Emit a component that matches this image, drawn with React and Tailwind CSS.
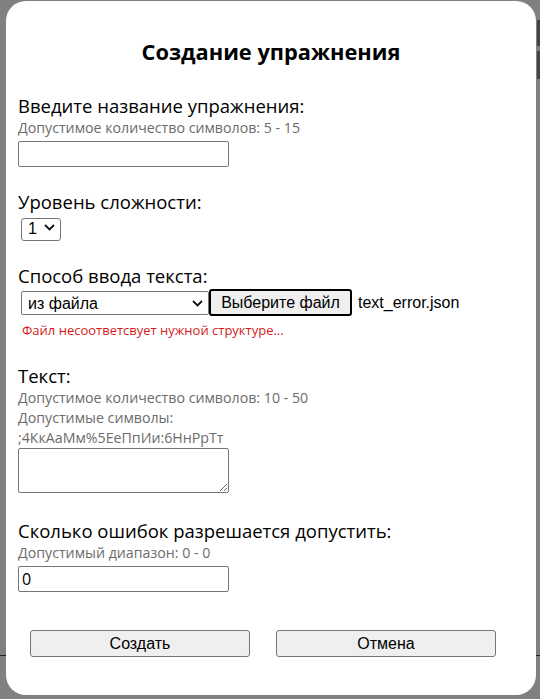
import { useState } from "react";

const ChevronDown = () => (
  <svg width="11" height="7" viewBox="0 0 11 7" fill="none" className="pointer-events-none">
    <path d="M1 1l4.5 4.5L10 1" stroke="#111" strokeWidth="1.8" />
  </svg>
);

const Hint = ({ children }) => (
  <p className="text-[14.2px] leading-[20px] text-[#6b6b6b]">{children}</p>
);

const Label = ({ children }) => (
  <p className="text-[18.5px] leading-[24px] text-black">{children}</p>
);

const App = () => {
  const [name, setName] = useState("");
  const [level, setLevel] = useState("1");
  const [mode, setMode] = useState("file");
  const [text, setText] = useState("");
  const [errors, setErrors] = useState("0");

  return (
    <div
      className="relative h-[699px] w-[540px] overflow-hidden bg-[#808080] pt-px pl-[6px]"
      style={{ fontFamily: '"Open Sans", "Noto Sans", sans-serif' }}
    >
      <div className="absolute left-0 right-0 top-[655px] h-px bg-[#222]" />
      <div className="absolute right-0 top-[20px] h-[26px] w-[3px] bg-[#444]" />
      <div className="absolute right-0 top-[51px] h-[28px] w-[3px] bg-[#444]" />

      <div className="relative flex h-[694px] w-[530px] flex-col rounded-[20px] bg-white px-3">
        <h2 className="pt-[36px] text-center text-[21.8px] font-bold leading-[30px] text-black">
          Создание упражнения
        </h2>

        <div className="mt-[27px]">
          <Label>Введите название упражнения:</Label>
          <Hint>Допустимое количество символов: 5 - 15</Hint>
          <input
            value={name}
            onChange={(e) => setName(e.target.value)}
            className="mt-[3px] h-[26px] w-[211px] rounded-[2px] border border-[#767676] px-1 text-[16px]"
          />
        </div>

        <div className="mt-[23px]">
          <Label>Уровень сложности:</Label>
          <div className="relative ml-[3px] mt-[2px] h-[23px] w-[40px]">
            <select
              value={level}
              onChange={(e) => setLevel(e.target.value)}
              className="h-full w-full appearance-none rounded-[3px] border border-[#767676] bg-white pl-[6px] text-[16px] leading-[20px]"
              style={{ fontFamily: '"Liberation Sans", Arial, sans-serif' }}
            >
              <option value="1">1</option>
              <option value="2">2</option>
              <option value="3">3</option>
            </select>
            <span className="absolute right-[6px] top-[8px] flex">
              <ChevronDown />
            </span>
          </div>
        </div>

        <div className="mt-[25px]">
          <Label>Способ ввода текста:</Label>
          <div
            className="ml-[3px] mt-px flex items-center text-[16px]"
            style={{ fontFamily: '"Liberation Sans", Arial, sans-serif' }}
          >
            <div className="relative h-[24px] w-[188px]">
              <select
                value={mode}
                onChange={(e) => setMode(e.target.value)}
                className="h-full w-full appearance-none rounded-[2px] border border-[#767676] bg-white pl-[6px] text-[16px]"
              >
                <option value="file">из файла</option>
                <option value="hand">вручную</option>
              </select>
              <span className="absolute right-[6px] top-[9px] flex">
                <ChevronDown />
              </span>
            </div>
            <button className="h-[27px] w-[143px] rounded-[3px] border-2 border-black bg-[#efefef] text-[16px] text-black">
              Выберите файл
            </button>
            <span className="ml-[6px] text-black">text_error.json</span>
          </div>
          <p className="ml-[4px] mt-[5px] text-[13px] leading-[18px] text-[#d41c1c]">
            Файл несоответсвует нужной структуре...
          </p>
        </div>

        <div className="mt-[25px]">
          <Label>Текст:</Label>
          <Hint>Допустимое количество символов: 10 - 50</Hint>
          <Hint>Допустимые символы:</Hint>
          <Hint>;4КкАаМм%5ЕеПпИи:6НнРрТт</Hint>
          <textarea
            value={text}
            onChange={(e) => setText(e.target.value)}
            className="block h-[45px] w-[211px] rounded-[2px] border border-[#767676] px-1 text-[16px]"
          />
        </div>

        <div className="mt-[26px]">
          <Label>Сколько ошибок разрешается допустить:</Label>
          <Hint>Допустимый диапазон: 0 - 0</Hint>
          <input
            value={errors}
            onChange={(e) => setErrors(e.target.value)}
            className="mt-[3px] h-[26px] w-[211px] rounded-[2px] border border-[#767676] px-[3px] text-[16px] text-black"
          />
        </div>

        <div
          className="mt-[38px] flex gap-[26px] pl-[12px] text-[16px]"
          style={{ fontFamily: '"Liberation Sans", Arial, sans-serif' }}
        >
          <button className="h-[27px] w-[220px] rounded-[3px] border border-[#767676] bg-[#efefef] text-black">
            Создать
          </button>
          <button className="h-[27px] w-[220px] rounded-[3px] border border-[#767676] bg-[#efefef] text-black">
            Отмена
          </button>
        </div>
      </div>
    </div>
  );
};

export default App;
